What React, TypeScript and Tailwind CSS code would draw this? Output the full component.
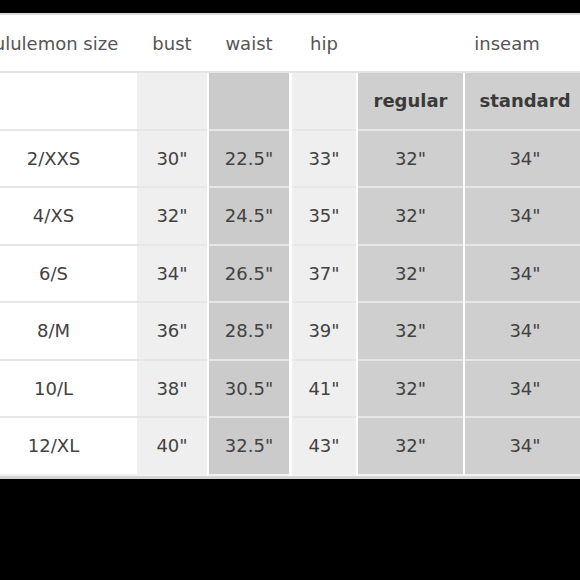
import React from 'react';

// column widths in px, first column runs off the left edge, last one off the right
const cols = [
  { w: 'w-[167px]', bg: 'bg-white' },
  { w: 'w-[70px]', bg: 'bg-[#efefef]' },
  { w: 'w-[80px] ml-[2px]', bg: 'bg-[#cbcbcb]' },
  { w: 'w-[64px] ml-[3px]', bg: 'bg-[#efefef]' },
  { w: 'w-[105px] ml-[2px]', bg: 'bg-[#cfcfcf]' },
  { w: 'w-[120px] ml-[2px]', bg: 'bg-[#cfcfcf]' },
  { w: 'w-[65px] ml-[2px]', bg: 'bg-[#cfcfcf]' },
];

const rows = [
  ['2/XXS', '30"', '22.5"', '33"', '32"', '34"', ''],
  ['4/XS', '32"', '24.5"', '35"', '32"', '34"', ''],
  ['6/S', '34"', '26.5"', '37"', '32"', '34"', ''],
  ['8/M', '36"', '28.5"', '39"', '32"', '34"', ''],
  ['10/L', '38"', '30.5"', '41"', '32"', '34"', ''],
  ['12/XL', '40"', '32.5"', '43"', '32"', '34"', ''],
];

const subHead = ['', '', '', '', 'regular', 'standard', ''];

export default function App() {
  return (
    <div
      className="w-[580px] h-[580px] bg-black overflow-hidden pt-[13px] text-[#424242]"
      style={{ fontFamily: '"DejaVu Sans", Verdana, sans-serif' }}
    >
      <div className="w-[580px] bg-white border-t-2 border-[#d9d9d9] overflow-hidden">
        <div className="-ml-[30px] w-[720px] text-[18px]">
          {/* top header */}
          <div className="flex h-[58px] border-b-2 border-[#e4e4e4] text-[#555]">
            <div className="w-[167px] flex items-center justify-center">lululemon size</div>
            <div className="w-[70px] flex items-center justify-center">bust</div>
            <div className="w-[80px] ml-[2px] flex items-center justify-center">waist</div>
            <div className="w-[64px] ml-[3px] flex items-center justify-center">hip</div>
            <div className="w-[298px] ml-[2px] flex items-center justify-center">inseam</div>
          </div>

          {/* sub header */}
          <div className="flex h-[57.5px]">
            {cols.map((c, i) => (
              <div
                key={i}
                className={`${c.w} ${i === 0 ? 'bg-white' : c.bg} border-b-2 border-[#e6e6e6] flex items-center justify-center font-bold text-[#3a3a3a]`}
              >
                {subHead[i]}
              </div>
            ))}
          </div>

          {rows.map((r, ri) => (
            <div key={ri} className="flex h-[57.5px]">
              {cols.map((c, i) => (
                <div
                  key={i}
                  className={`${c.w} ${c.bg} ${ri < rows.length - 1 ? 'border-b-2 border-[#e6e6e6]' : 'border-b-2 border-[#f2f2f2]'} flex items-center justify-center`}
                >
                  {r[i]}
                </div>
              ))}
            </div>
          ))}
        </div>
      </div>
      <div className="h-[3px] bg-[#d4d4d4]" />
    </div>
  );
}
